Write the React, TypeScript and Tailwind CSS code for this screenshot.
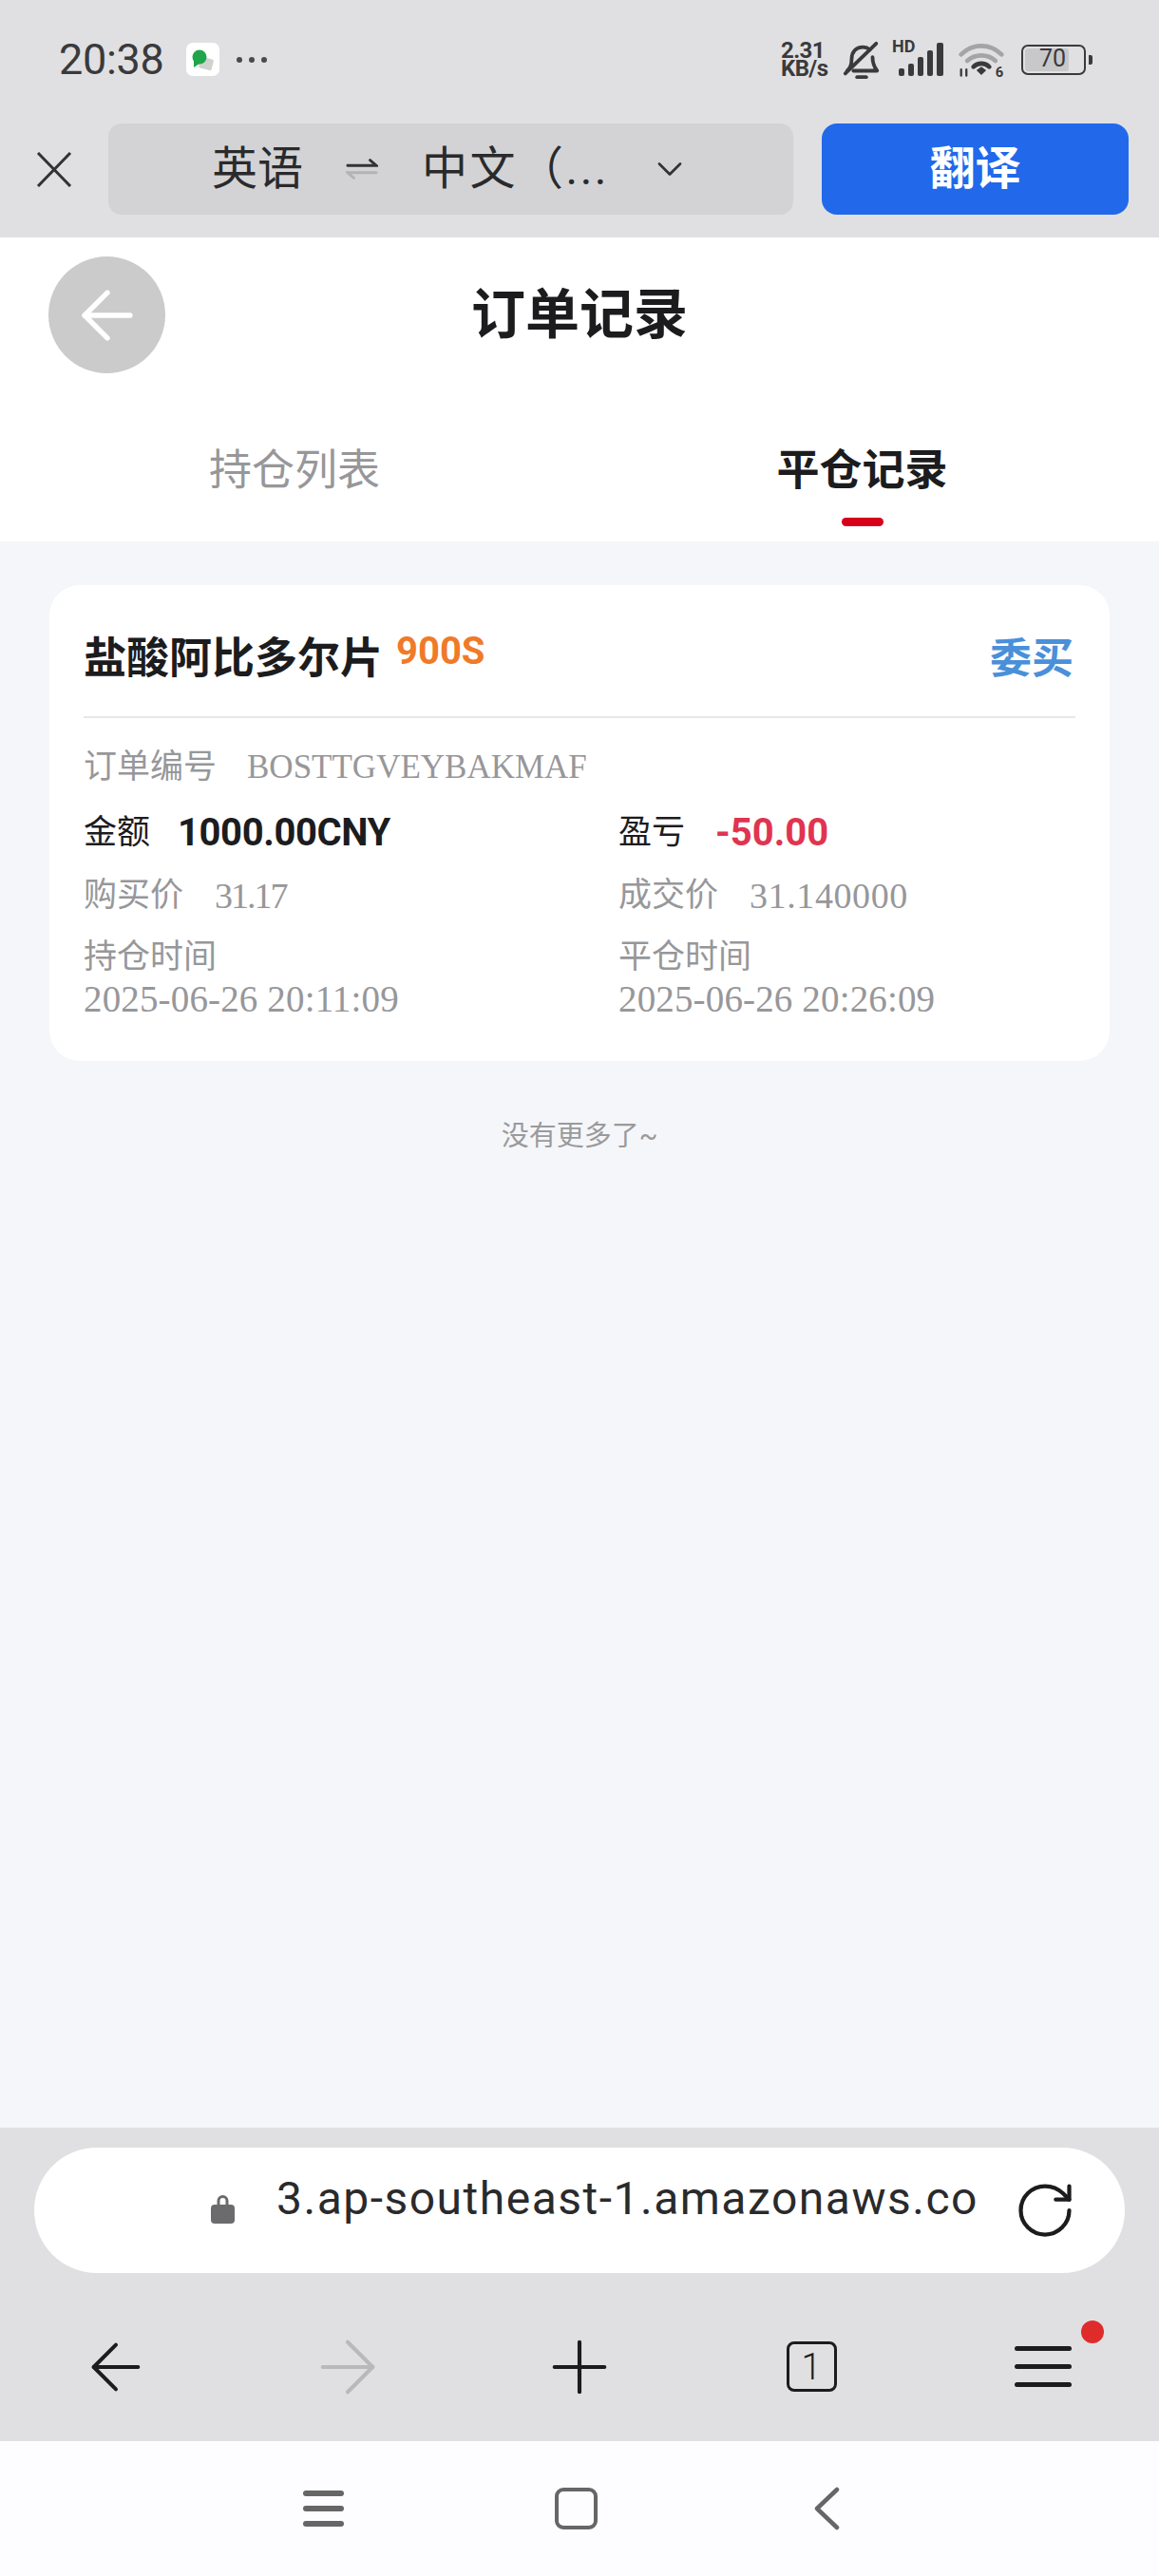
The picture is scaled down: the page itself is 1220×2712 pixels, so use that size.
import { ArrowLeft, ArrowRight, ChevronDown, Plus, RotateCw } from 'lucide-react';

const sans = "font-['Roboto','Noto_Sans_CJK_SC',sans-serif]";
const serif = "font-['Liberation_Serif','Noto_Sans_CJK_SC',serif]";

function StatusIcons() {
  return (
    <div className="flex items-center gap-[10px] text-[#3a3a3c]">
      <div className="flex flex-col text-[24px] leading-[19px] font-bold tracking-[-0.6px] items-start w-[53px]">
        <span>2.31</span>
        <span>KB/s</span>
      </div>
      <svg width="44" height="46" viewBox="0 0 46 46" fill="none" stroke="#3a3a3c" strokeWidth="4" strokeLinecap="round" strokeLinejoin="round">
        <path d="M7 35c4-3 5-7 5-13 0-8 5-13 12-13 3 0 6 1 8 3M35 20c0 6 2 11 5 15H14" />
        <path d="M5 38 39 5" />
        <path d="M18 42h10" />
      </svg>
      <div className="relative w-[56px] h-[36px]">
        <span className="absolute left-0 top-[-5px] text-[18px] leading-[18px] font-bold">HD</span>
        <svg className="absolute left-0 top-0" width="56" height="36" viewBox="0 0 56 36" fill="#3a3a3c">
          <rect x="7" y="27" width="6" height="8" rx="2" />
          <rect x="17" y="22" width="6" height="13" rx="2" />
          <rect x="27" y="15" width="6" height="20" rx="2" />
          <rect x="37" y="8" width="6" height="27" rx="2" />
          <rect x="47" y="0" width="7" height="35" rx="2" />
        </svg>
      </div>
      <svg className="ml-[3px]" width="50" height="40" viewBox="0 0 54 40" fill="none" strokeLinecap="round">
        <path d="M4 14c13-13 33-13 46 0" stroke="#a4a4a6" strokeWidth="5" />
        <path d="M11 21c9-8 23-8 32 0" stroke="#a4a4a6" strokeWidth="5" />
        <path d="M18 28c5-5 13-5 18 0" stroke="#3a3a3c" strokeWidth="5" />
        <path d="M23 32l4-3 4 3-4 4z" fill="#3a3a3c" stroke="#3a3a3c" strokeWidth="2" />
        <path d="M4 31v7M10 38v-7" stroke="#3a3a3c" strokeWidth="2.5" />
        <text x="43" y="39" fontSize="16" fontWeight="700" fill="#3a3a3c" stroke="none" fontFamily="Roboto">6</text>
      </svg>
      <div className="flex items-center ml-[7px]">
        <div className="w-[68px] h-[32px] rounded-[7px] border-[2.5px] border-[#3a3a3c] p-[2px]">
          <div className="w-[76%] h-full rounded-[3px] bg-[#c8c8ca] relative">
            <span className="absolute left-[15px] top-[-2px] text-[25px] leading-[26px] font-normal">70</span>
          </div>
        </div>
        <div className="w-[4px] h-[10px] rounded-r-[2px] bg-[#3a3a3c] ml-[3px]" />
      </div>
    </div>
  );
}

function StatusBar() {
  return (
    <div className="h-[125px] pl-[62px] pr-[70px] flex items-center justify-between">
      <div className="flex items-center">
        <span className="text-[45px] leading-none text-[#3a3a3c] tracking-[-0.3px]">20:38</span>
        <div className="ml-[23px] w-[35px] h-[35px] rounded-[7px] bg-white flex items-center justify-center">
          <svg width="26" height="26" viewBox="0 0 26 26">
            <rect x="10" y="11" width="14" height="12" rx="2" fill="#cfd2cf" transform="rotate(14 17 17)" />
            <circle cx="10" cy="10" r="7.5" fill="#1fa64a" />
            <path d="M4 13l0 8 6-4z" fill="#1fa64a" />
          </svg>
        </div>
        <div className="ml-[18px] flex gap-[7px]">
          <span className="w-[6px] h-[6px] rounded-full bg-[#4a4a4c]" />
          <span className="w-[6px] h-[6px] rounded-full bg-[#4a4a4c]" />
          <span className="w-[6px] h-[6px] rounded-full bg-[#4a4a4c]" />
        </div>
      </div>
      <StatusIcons />
    </div>
  );
}

function TranslateBar() {
  return (
    <div className="h-[125px] pl-[38px] pr-[30px] pt-[5px] flex items-start">
      <svg className="mt-[30px] shrink-0" width="38" height="37" viewBox="0 0 38 37" fill="none" stroke="#333" strokeWidth="3">
        <path d="M2 1 36 36M36 1 2 36" />
      </svg>
      <div className="ml-[38px] w-[721px] h-[96px] rounded-[14px] bg-[#d3d3d5] flex items-center text-[#2a2a2c] text-[48px] pl-[109px]">
        <span className="leading-none">英语</span>
        <svg className="ml-[45px]" width="34" height="28" viewBox="0 0 36 28" fill="none" strokeWidth="3" strokeLinecap="round">
          <path d="M2 10h32l-7-6" stroke="#333" />
          <path d="M34 18H2l7 6" stroke="#b4b4b6" />
        </svg>
        <span className="ml-[46px] leading-none tracking-[2.5px] whitespace-nowrap">中文（...</span>
        <ChevronDown className="w-[44px] h-[44px] ml-[42px] text-[#333]" strokeWidth={1.5} />
      </div>
      <button className="ml-[30px] w-[323px] h-[96px] rounded-[16px] bg-[#2268ea] text-white text-[48px] font-bold leading-none">
        翻译
      </button>
    </div>
  );
}

function PageHeader() {
  return (
    <div className="bg-white h-[320px] flex flex-col">
      <div className="relative h-[160px] flex items-center justify-center">
        <div className="absolute left-[51px] top-[20px] w-[123px] h-[123px] rounded-full bg-[#cbcbcb] flex items-center justify-center">
          <ArrowLeft className="w-[82px] h-[82px] text-white" strokeWidth={1.6} />
        </div>
        <h1 className="text-[57px] font-bold leading-none text-[#1c1c1e] mt-[2px]">订单记录</h1>
      </div>
      <div className="grid grid-cols-2 pt-[58px]">
        <div className="flex justify-center pl-[10px]">
          <span className="text-[45px] leading-[56px] text-[#97979a]">持仓列表</span>
        </div>
        <div className="flex flex-col items-center">
          <span className="text-[45px] leading-[56px] font-bold text-[#1c1c1e] mr-[15px]">平仓记录</span>
          <div className="w-[44px] h-[9px] rounded-full bg-[#d6001c] mt-[21px] mr-[15px]" />
        </div>
      </div>
    </div>
  );
}

function OrderCard() {
  return (
    <div className="mx-[52px] mt-[46px] h-[501px] bg-white rounded-[32px] px-[36px] pt-[45px]">
      <div className="flex items-start justify-between h-[95px] border-b-2 border-[#e8e8ea]">
        <div className="flex items-start">
          <span className="text-[45px] leading-[66px] font-bold text-[#1c1c1e]">盐酸阿比多尔片</span>
          <span className="ml-[14px] text-[40px] leading-[50px] font-bold text-[#f07a28]">900S</span>
        </div>
        <span className="text-[44px] leading-[66px] font-bold text-[#4a90d9] mr-[2px]">委买</span>
      </div>
      <div className={`mt-[28px] text-[35px] leading-[48px] text-[#97979a] flex ${serif}`}>
        <span className={sans}>订单编号</span>
        <span className="ml-[32px]">BOSTTGVEYBAKMAF</span>
      </div>
      <div className="grid grid-cols-2 mt-[21px] text-[35px]">
        <div className="flex items-center h-[48px] text-[#1c1c1e]">
          <span>金额</span>
          <span className="ml-[29px] text-[40px] font-bold tracking-[-0.4px]">1000.00CNY</span>
        </div>
        <div className="flex items-center h-[48px] text-[#1c1c1e] pl-[41px]">
          <span>盈亏</span>
          <span className="ml-[32px] text-[40px] font-bold text-[#e0344f]">-50.00</span>
        </div>
        <div className="flex items-center h-[48px] mt-[18px] text-[#97979a]">
          <span>购买价</span>
          <span className={`ml-[33px] text-[38px] tracking-[-2px] ${serif}`}>31.17</span>
        </div>
        <div className="flex items-center h-[48px] mt-[18px] text-[#97979a] pl-[41px]">
          <span>成交价</span>
          <span className={`ml-[33px] text-[38px] tracking-[0.6px] ${serif}`}>31.140000</span>
        </div>
        <div className="flex flex-col mt-[18px] text-[#97979a]">
          <span className="leading-[46px]">持仓时间</span>
          <span className={`leading-[42px] text-[39px] tracking-[0.15px] ${serif}`}>2025-06-26 20:11:09</span>
        </div>
        <div className="flex flex-col mt-[18px] text-[#97979a] pl-[41px]">
          <span className="leading-[46px]">平仓时间</span>
          <span className={`leading-[42px] text-[39px] tracking-[0.15px] ${serif}`}>2025-06-26 20:26:09</span>
        </div>
      </div>
    </div>
  );
}

function AddressBar() {
  return (
    <div className="mx-[36px] h-[132px] rounded-[66px] bg-white flex items-center relative">
      <svg className="absolute left-[186px] top-[49px]" width="25" height="31" viewBox="0 0 25 31">
        <path d="M8 12V7a4.5 4.5 0 0 1 9 0v5" fill="none" stroke="#6b6b6d" strokeWidth="3" />
        <rect x="0" y="11" width="25" height="20" rx="4" fill="#6b6b6d" />
      </svg>
      <span className="ml-[255px] text-[48px] leading-none text-[#2a2a2c] mt-[-24px] tracking-[1.5px] whitespace-nowrap">
        3.ap-southeast-1.amazonaws.co
      </span>
      <RotateCw className="absolute left-[1030px] top-[32px] w-[68px] h-[68px] text-[#1c1c1e]" strokeWidth={1.5} />
    </div>
  );
}

function Toolbar() {
  return (
    <div className="flex-1 grid grid-cols-5 items-center pt-[20px]">
      <div className="flex justify-center">
        <ArrowLeft className="w-[80px] h-[80px] text-[#1c1c1e]" strokeWidth={1.2} />
      </div>
      <div className="flex justify-center">
        <ArrowRight className="w-[90px] h-[90px] text-[#b9b9bb]" strokeWidth={1.1} />
      </div>
      <div className="flex justify-center">
        <Plus className="w-[90px] h-[90px] text-[#1c1c1e]" strokeWidth={1.1} />
      </div>
      <div className="flex justify-center">
        <div className="w-[53px] h-[53px] rounded-[8px] border-[3.5px] border-[#1c1c1e] flex items-center justify-center text-[38px] font-light leading-none text-[#1c1c1e]">
          1
        </div>
      </div>
      <div className="flex justify-center">
        <div className="relative w-[60px] h-[43px] flex flex-col justify-between">
          <span className="h-[5px] bg-[#1c1c1e] rounded-full" />
          <span className="h-[5px] bg-[#1c1c1e] rounded-full" />
          <span className="h-[5px] bg-[#1c1c1e] rounded-full" />
          <span className="absolute left-[70px] top-[-27px] w-[24px] h-[24px] rounded-full bg-[#e02b2b]" />
        </div>
      </div>
    </div>
  );
}

function NavBar() {
  return (
    <div className="h-[142px] bg-[#fdfcfe] flex items-center pl-[319px]">
      <div className="w-[43px] h-[38px] flex flex-col justify-between">
        <span className="h-[6px] bg-[#666] rounded-full" />
        <span className="h-[6px] bg-[#666] rounded-full" />
        <span className="h-[6px] bg-[#666] rounded-full" />
      </div>
      <div className="ml-[222px] w-[45px] h-[44px] rounded-[9px] border-[4px] border-[#666]" />
      <svg className="ml-[226px]" width="29" height="46" viewBox="0 0 29 46" fill="none" stroke="#666" strokeWidth="4.5" strokeLinecap="round" strokeLinejoin="round">
        <path d="M26 3 5 23l21 20" />
      </svg>
    </div>
  );
}

export default function App() {
  return (
    <div className={`w-[1220px] h-[2712px] flex flex-col bg-[#f5f6f9] ${sans}`}>
      <div className="bg-[#e0e0e2]">
        <StatusBar />
        <TranslateBar />
      </div>
      <PageHeader />
      <div className="flex-1">
        <OrderCard />
        <p className="mt-[62px] text-center text-[29px] leading-[34px] text-[#9a9a9c]">没有更多了~</p>
      </div>
      <div className="h-[330px] bg-[#e0e0e2] pt-[21px] flex flex-col">
        <AddressBar />
        <Toolbar />
      </div>
      <NavBar />
    </div>
  );
}
